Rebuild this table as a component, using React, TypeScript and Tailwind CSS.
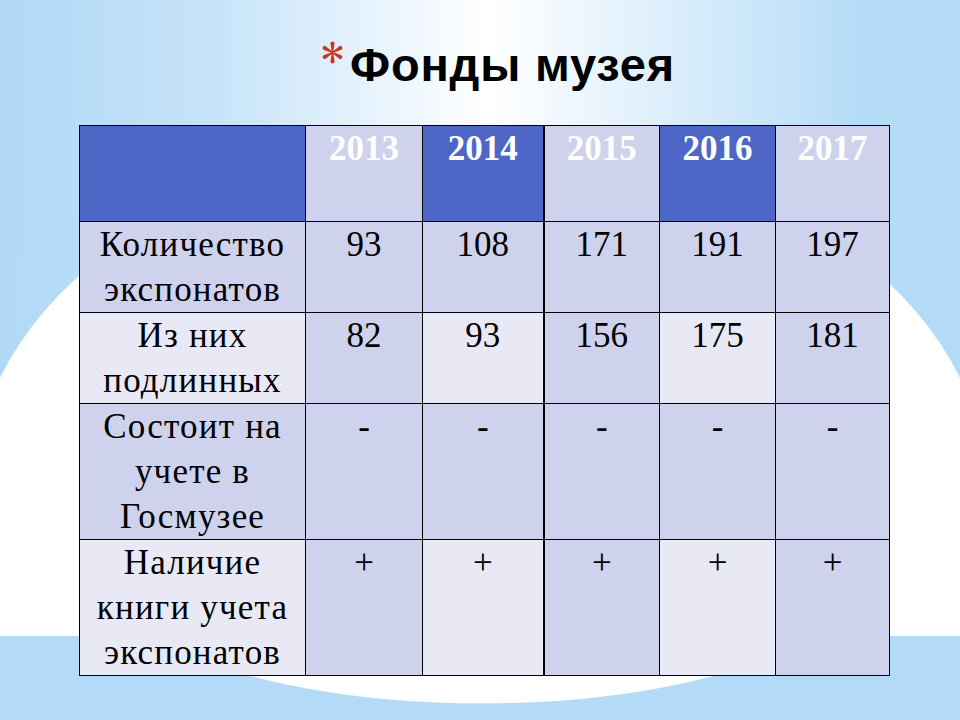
import React from 'react';

type Tone = 'blue' | 'lav' | 'light';

const toneClass: Record<Tone, string> = {
  blue: 'bg-[#4e67c7]',
  lav: 'bg-[#cfd2ec]',
  light: 'bg-[#e8e9f5]',
};

const years = ['2013', '2014', '2015', '2016', '2017'];
const headerTones: Tone[] = ['blue', 'lav', 'blue', 'lav', 'blue', 'lav'];
const stripe: Tone[] = ['light', 'lav', 'light', 'lav', 'light', 'lav'];
const solid: Tone[] = ['lav', 'lav', 'lav', 'lav', 'lav', 'lav'];

const rows: { label: string[]; values: string[]; tones: Tone[]; h: string }[] = [
  { label: ['Количество', 'экспонатов'], values: ['93', '108', '171', '191', '197'], tones: solid, h: 'h-[91px]' },
  { label: ['Из них', 'подлинных'], values: ['82', '93', '156', '175', '181'], tones: stripe, h: 'h-[90px]' },
  { label: ['Состоит на', 'учете в', 'Госмузее'], values: ['-', '-', '-', '-', '-'], tones: solid, h: 'h-[135px]' },
  { label: ['Наличие', 'книги учета', 'экспонатов'], values: ['+', '+', '+', '+', '+'], tones: stripe, h: 'h-[136px]' },
];

const colWidths = ['w-[226px]', 'w-[117px]', 'w-[121px]', 'w-[116px]', 'w-[116px]', 'w-[114px]'];

// extra-thick rule between 2014 and 2015
const cellBorder = (i: number) => (i === 3 ? 'border border-black border-l-2' : 'border border-black');

function Backdrop() {
  return (
    <svg className="absolute inset-0" width="960" height="720" viewBox="0 0 960 720">
      <defs>
        <linearGradient id="sky" x1="0" y1="0" x2="1" y2="0">
          <stop offset="0" stopColor="#b0d8f6" />
          <stop offset="0.22" stopColor="#c6e3f9" />
          <stop offset="0.51" stopColor="#ffffff" />
          <stop offset="0.8" stopColor="#c9e5f9" />
          <stop offset="0.9" stopColor="#b4dbf7" />
          <stop offset="1" stopColor="#b3dbf7" />
        </linearGradient>
        <radialGradient id="glow" cx="0.5" cy="1" r="0.5">
          <stop offset="0" stopColor="#ffffff" />
          <stop offset="1" stopColor="#ffffff" stopOpacity="0" />
        </radialGradient>
      </defs>
      <rect width="960" height="720" fill="url(#sky)" />
      <rect y="636" width="960" height="84" fill="#b3dbf7" />
      <path
        d="M -10 400 Q 30 300 140 230 L 820 230 Q 930 300 970 400 L 970 636 L 801 636 A 340 103 0 0 1 163 636 L -10 636 Z"
        fill="#ffffff"
      />
      <rect x="330" y="700" width="300" height="40" fill="url(#glow)" />
    </svg>
  );
}

function Asterisk() {
  const arm = 'M -0.7 0 L -2.1 -9 A 2.1 2.1 0 0 1 2.1 -9 L 0.7 0 Z';
  return (
    <svg width="25" height="25" viewBox="-12.5 -12.5 25 25" className="mt-[-1px]">
      {[0, 60, 120, 180, 240, 300].map((a) => (
        <path key={a} d={arm} fill="#c9381e" transform={`rotate(${a})`} />
      ))}
    </svg>
  );
}

export default function App() {
  return (
    <div className="relative w-[960px] h-[720px] overflow-hidden">
      <Backdrop />
      <div className="relative flex flex-col">
        <div className="flex items-start pl-[320px] pt-[41px]">
          <Asterisk />
          <h1 className="ml-[5px] text-[47px] leading-none tracking-[0.8px] font-bold text-black font-['Liberation_Sans',Arial,sans-serif]">
            Фонды музея
          </h1>
        </div>

        <table className="mt-[37px] ml-[79px] w-[810px] table-fixed border-collapse font-['Liberation_Serif','Times_New_Roman',serif] text-[35px] leading-[45px] text-black">
          <thead>
            <tr>
              {headerTones.map((t, i) => (
                <th
                  key={i}
                  className={`${colWidths[i]} h-[96px] p-0 align-top text-center font-bold text-white ${toneClass[t]} ${cellBorder(i)}`}
                >
                  {i === 0 ? '' : years[i - 1]}
                </th>
              ))}
            </tr>
          </thead>
          <tbody>
            {rows.map((r, ri) => (
              <tr key={ri}>
                <td className={`${r.h} p-0 align-top text-center tracking-[1.2px] ${toneClass[r.tones[0]]} ${cellBorder(0)}`}>
                  {r.label.map((l) => (
                    <div key={l}>{l}</div>
                  ))}
                </td>
                {r.values.map((v, vi) => (
                  <td key={vi} className={`p-0 align-top text-center ${toneClass[r.tones[vi + 1]]} ${cellBorder(vi + 1)}`}>
                    {v}
                  </td>
                ))}
              </tr>
            ))}
          </tbody>
        </table>
      </div>
    </div>
  );
}
